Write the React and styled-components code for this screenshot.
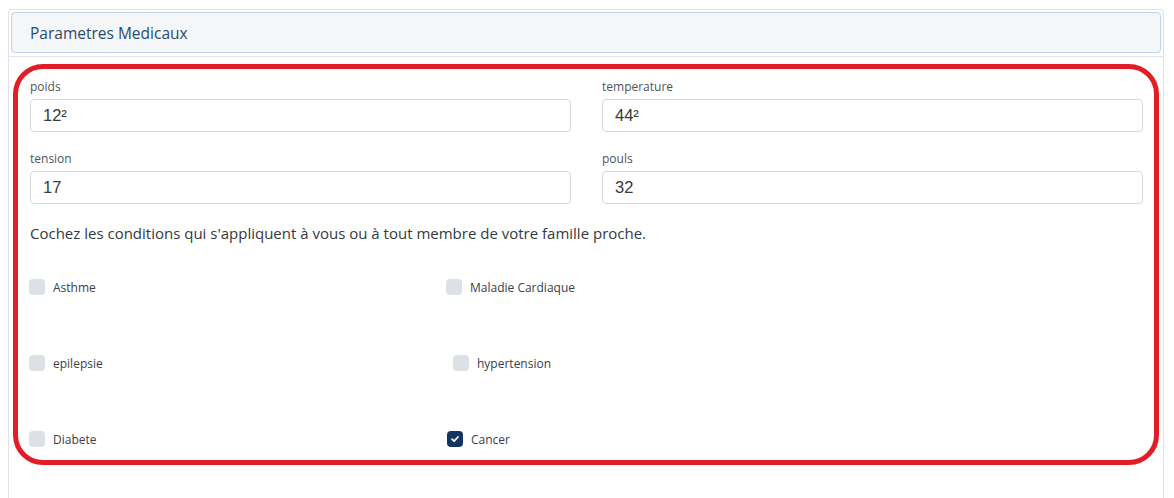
import React from 'react'
import styled, { createGlobalStyle } from 'styled-components'

const GlobalStyle = createGlobalStyle`
  html, body {
    margin: 0;
    padding: 0;
    background: #ffffff;
    font-family: 'Open Sans', 'Noto Sans', sans-serif;
  }
`

const fields = [
  { label: 'poids', value: '12²' },
  { label: 'temperature', value: '44²' },
  { label: 'tension', value: '17' },
  { label: 'pouls', value: '32' }
]

const conditions = [
  { label: 'Asthme' },
  { label: 'Maladie Cardiaque' },
  { label: 'epilepsie' },
  { label: 'hypertension', shift: 7 },
  { label: 'Diabete' },
  { label: 'Cancer', checked: true, shift: 1 }
]

const CheckIcon = () => (
  <svg width='10' height='10' viewBox='0 0 10 10' fill='none'>
    <path d='M2 5.2 L4.1 7.2 L8 3' stroke='#ffffff' strokeWidth='1.8' strokeLinecap='round' strokeLinejoin='round' />
  </svg>
)

const App = () => {
  return (
    <Page>
      <GlobalStyle />
      <Card>
        <CardHeader>
          <HeaderBox>Parametres Medicaux</HeaderBox>
        </CardHeader>
        <CardBody>
          <Highlight>
            <FieldGrid>
              {fields.map(f => (
                <Field key={f.label}>
                  <Label>{f.label}</Label>
                  <Input defaultValue={f.value} />
                </Field>
              ))}
            </FieldGrid>
            <Notice>Cochez les conditions qui s'appliquent à vous ou à tout membre de votre famille proche.</Notice>
            <CheckGrid>
              {conditions.map(c => (
                <CheckRow key={c.label} $shift={c.shift || 0}>
                  <Box $checked={c.checked}>{c.checked && <CheckIcon />}</Box>
                  <CheckLabel>{c.label}</CheckLabel>
                </CheckRow>
              ))}
            </CheckGrid>
          </Highlight>
        </CardBody>
      </Card>
    </Page>
  )
}

const Page = styled.div`
  padding: 9px 10px 0 8px;
  height: 498px;
  box-sizing: border-box;
  overflow: hidden;
`

const Card = styled.div`
  border: 1px solid #dfe3e8;
  border-radius: 3px;
  background: #ffffff;
  height: 600px;
`

const CardHeader = styled.div`
  padding: 2px 2px 3px 2px;
  border-bottom: 1px solid #dfe3e8;
`

const HeaderBox = styled.div`
  height: 41px;
  box-sizing: border-box;
  display: flex;
  align-items: center;
  padding-left: 18px;
  border: 1px solid #bcd5ea;
  border-radius: 4px;
  background: #f5f6f8;
  color: #2a4b6c;
  font-size: 15.5px;
`

const CardBody = styled.div`
  padding: 7px 4px 0 4px;
`

const Highlight = styled.div`
  border: 5px solid #e31d25;
  border-radius: 30px;
  padding: 10px 11px 13px 12px;
`

const FieldGrid = styled.div`
  display: grid;
  grid-template-columns: 1fr 1fr;
  gap: 19px 31px;
`

const Field = styled.div`
  display: flex;
  flex-direction: column;
`

const Label = styled.label`
  font-size: 12px;
  line-height: 16px;
  color: #505459;
  margin-bottom: 4px;
`

const Input = styled.input`
  height: 33px;
  box-sizing: border-box;
  border: 1px solid #d4d8dc;
  border-radius: 4px;
  padding: 0 12px;
  font-family: 'Liberation Sans', Arial, sans-serif;
  font-size: 16.5px;
  color: #3a3a3a;
  outline: none;
`

const Notice = styled.p`
  margin: 19px 0 0 0;
  font-size: 15px;
  line-height: 20px;
  color: #343a40;
`

const CheckGrid = styled.div`
  display: grid;
  grid-template-columns: 417px 1fr;
  row-gap: 60px;
  margin-top: 36px;
  margin-left: -1px;
`

const CheckRow = styled.div`
  display: flex;
  align-items: center;
  gap: 8px;
  height: 16px;
  margin-left: ${({ $shift }) => $shift}px;
`

const Box = styled.span`
  width: 16px;
  height: 16px;
  border-radius: 4px;
  background: ${({ $checked }) => ($checked ? '#143461' : '#dde0e5')};
  display: flex;
  align-items: center;
  justify-content: center;
  flex-shrink: 0;
`

const CheckLabel = styled.span`
  font-size: 12px;
  color: #3b404a;
`

export default App
